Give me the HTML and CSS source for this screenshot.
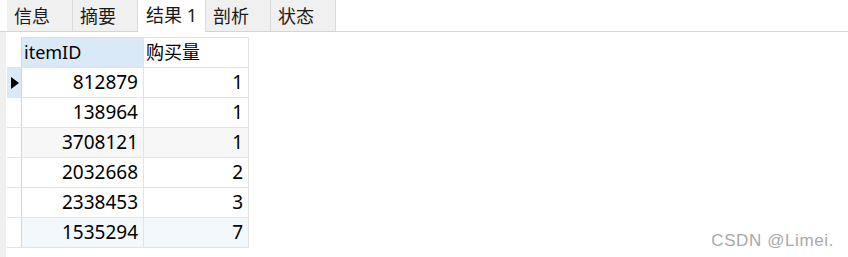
FILE: index.html
```html
<!DOCTYPE html>
<html lang="zh-CN">
<head>
    <meta charset="UTF-8">
    <title>结果 1</title>
    <link rel="stylesheet" href="styles.css">
</head>
<body>
    <div class="tab-bar">
        <div class="tab">信息</div>
        <div class="tab">摘要</div>
        <div class="tab active">结果 1</div>
        <div class="tab">剖析</div>
        <div class="tab">状态</div>
    </div>

    <div class="content">
        <div class="side-strip"></div>
        <div class="grid-area">
            <table class="grid">
                <thead>
                    <tr>
                        <th class="indicator"></th>
                        <th class="col-id selected">itemID</th>
                        <th class="col-qty">购买量</th>
                    </tr>
                </thead>
                <tbody>
                    <tr>
                        <td class="indicator current"><span class="arrow"></span></td>
                        <td class="num">812879</td>
                        <td class="num">1</td>
                    </tr>
                    <tr>
                        <td class="indicator"></td>
                        <td class="num">138964</td>
                        <td class="num">1</td>
                    </tr>
                    <tr class="alt">
                        <td class="indicator"></td>
                        <td class="num">3708121</td>
                        <td class="num">1</td>
                    </tr>
                    <tr>
                        <td class="indicator"></td>
                        <td class="num">2032668</td>
                        <td class="num">2</td>
                    </tr>
                    <tr>
                        <td class="indicator"></td>
                        <td class="num">2338453</td>
                        <td class="num">3</td>
                    </tr>
                    <tr class="hover">
                        <td class="indicator"></td>
                        <td class="num">1535294</td>
                        <td class="num">7</td>
                    </tr>
                </tbody>
            </table>
        </div>
    </div>

    <div class="watermark">CSDN @Limei.</div>
</body>
</html>
```

FILE: styles.css
```css
body {
    margin: 0;
    width: 848px;
    height: 257px;
    overflow: hidden;
    background: white;
    font-family: "Noto Sans", "Noto Sans CJK SC", sans-serif;
    font-size: 18px;
    color: #000;
    position: relative;
}

/* tabs */
.tab-bar {
    display: flex;
    height: 31px;
    padding-left: 7px;
    border-bottom: 1px solid #d4d4d4;
}

.tab {
    width: 65px;
    height: 31px;
    line-height: 33px;
    padding-left: 7px;
    box-sizing: border-box;
    background: #f0f0f0;
    border-right: 1px solid #dadada;
    color: #1a1a1a;
}

.tab:first-child {
    width: 66px;
}

.tab.active {
    width: 68px;
    height: 32px;
    background: white;
    padding-left: 8px;
    line-height: 31px;
}

/* grid */
.content {
    display: flex;
    height: 225px;
}

.side-strip {
    width: 6px;
    background: #f0f0f0;
}

.grid-area {
    padding: 5px 0 0 1px;
}

.grid {
    border-collapse: collapse;
    table-layout: fixed;
    font-size: 19px;
}

.grid th,
.grid td {
    height: 29px;
    padding: 0 4px;
    border: 1px solid #e3e3e3;
    font-weight: normal;
    white-space: nowrap;
    line-height: 29px;
}

.grid th {
    text-align: left;
    padding-left: 2px;
    font-size: 18px;
}

.grid .indicator {
    width: 14px;
    padding: 0;
    border-left: none;
    border-right: 1px solid #d6d6d6;
    background: white;
}

.grid thead .indicator {
    border-top: none;
}

.grid .col-id {
    width: 115px;
}

.grid .col-qty {
    width: 98px;
}

.grid th.selected {
    background: #d9e9f7;
}

.grid td.num {
    text-align: right;
    padding-right: 5px;
}

.grid .indicator.current {
    background: #d9e9f7;
}

.arrow {
    display: block;
    width: 0;
    height: 0;
    margin-left: 4px;
    border-top: 6px solid transparent;
    border-bottom: 6px solid transparent;
    border-left: 8px solid #000;
}

.grid tr.alt td.num {
    background: #f7f7f7;
}

.grid tr.hover td.num {
    background: #f3f8fd;
}

/* watermark over the page */
.watermark {
    position: absolute;
    right: 14px;
    bottom: 6px;
    font-family: "Liberation Sans", Arial, sans-serif;
    font-size: 17px;
    color: #a8a8a8;
    letter-spacing: 0.6px;
}
```
